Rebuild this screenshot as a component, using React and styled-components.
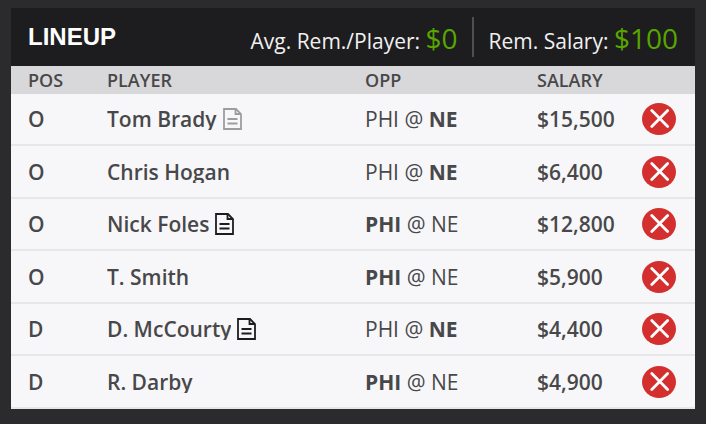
import React, { useState } from 'react'
import styled, { createGlobalStyle } from 'styled-components'

const lineup = [
  { id: 1, pos: 'O', name: 'Tom Brady', team: 'NE', salary: '$15,500', news: 'old' },
  { id: 2, pos: 'O', name: 'Chris Hogan', team: 'NE', salary: '$6,400' },
  { id: 3, pos: 'O', name: 'Nick Foles', team: 'PHI', salary: '$12,800', news: 'new' },
  { id: 4, pos: 'O', name: 'T. Smith', team: 'PHI', salary: '$5,900' },
  { id: 5, pos: 'D', name: 'D. McCourty', team: 'NE', salary: '$4,400', news: 'new' },
  { id: 6, pos: 'D', name: 'R. Darby', team: 'PHI', salary: '$4,900' },
]

function NewsIcon({ recent }) {
  return (
    <NewsSvg viewBox="0 0 19 22" $recent={recent} role="img" aria-label="Player news">
      <path d="M1 1H13L18 6V21H1Z" />
      <path d="M12.5 1V6H18" />
      <path d="M4.5 11H14.5M4.5 15.5H14.5" />
    </NewsSvg>
  )
}

function App() {
  const [players, setPlayers] = useState(lineup)

  const removePlayer = (id) => {
    setPlayers(players.filter((player) => player.id !== id))
  }

  return (
    <>
      <GlobalStyle />
      <Panel>
        <Header>
          <Title>LINEUP</Title>
          <Totals>
            <Total>Avg. Rem./Player: <Money>$0</Money></Total>
            <Total>Rem. Salary: <Money>$100</Money></Total>
          </Totals>
        </Header>
        <Table>
          <thead>
            <tr>
              <HeadCell $width="96px">POS</HeadCell>
              <HeadCell>PLAYER</HeadCell>
              <HeadCell $width="172px">OPP</HeadCell>
              <HeadCell $width="105px">SALARY</HeadCell>
              <HeadCell as="td" $width="53px" />
            </tr>
          </thead>
          <tbody>
            {players.map((player) => (
              <Row key={player.id}>
                <Cell>{player.pos}</Cell>
                <Cell>
                  <Player>
                    <Name>{player.name}</Name>
                    {player.news && <NewsIcon recent={player.news === 'new'} />}
                  </Player>
                </Cell>
                <Cell $light>
                  <Team $own={player.team === 'PHI'}>PHI</Team> @ <Team $own={player.team === 'NE'}>NE</Team>
                </Cell>
                <Cell>{player.salary}</Cell>
                <Cell>
                  <RemoveButton aria-label={`Remove ${player.name}`} onClick={() => removePlayer(player.id)}>
                    <svg viewBox="0 0 20 20" width="20" height="20">
                      <path d="M2.8 1.6L18.6 17.4M18.6 1.6L2.8 17.4" />
                    </svg>
                  </RemoveButton>
                </Cell>
              </Row>
            ))}
          </tbody>
        </Table>
      </Panel>
    </>
  )
}

const GlobalStyle = createGlobalStyle`
  * {
    box-sizing: border-box;
  }
  body {
    margin: 0;
    padding: 8px 11px 15px;
    background: #2b2b2d;
    color: #48484a;
    font-family: 'Open Sans', 'Noto Sans', sans-serif;
  }
`
const Panel = styled.main`
  background: #f7f7f9;
`
const Header = styled.header`
  display: flex;
  justify-content: space-between;
  align-items: center;
  height: 58px;
  padding: 0 17px;
  background: #1d1d1f;
  color: #fff;
`
const Title = styled.h1`
  margin: 0;
  font: bold 24px/28px 'Liberation Sans', Arial, sans-serif;
`
const Totals = styled.div`
  display: flex;
`
const Total = styled.div`
  height: 40px;
  padding-top: 3px;
  font-size: 21px;
  line-height: 36px;
  color: #f0f0f0;
  white-space: nowrap;

  & + & {
    margin-left: 14px;
    padding-left: 15px;
    border-left: 2px solid #4f4f51;
  }
`
const Money = styled.span`
  font-size: 28px;
  color: #58a600;
`
const Table = styled.table`
  width: 100%;
  table-layout: fixed;
  border-collapse: separate;
  border-spacing: 0;
`
const HeadCell = styled.th`
  width: ${(props) => props.$width || 'auto'};
  height: 28px;
  padding: 0;
  background: #d8d8da;
  font-size: 18px;
  font-weight: 600;
  line-height: 28px;
  text-align: left;

  &:first-child {
    padding-left: 17px;
  }
`
const Row = styled.tr`
  height: 52px;

  &:nth-child(even) {
    height: 53px;
  }
`
const Cell = styled.td`
  padding: 0;
  border-bottom: 2px solid #e7e7e9;
  font-size: 21px;
  font-weight: ${(props) => (props.$light ? 400 : 600)};
  line-height: 28px;
  vertical-align: middle;
  white-space: nowrap;

  &:first-child {
    padding-left: 17px;
  }
`
const Player = styled.div`
  display: flex;
  align-items: center;
  gap: 6px;
`
const Name = styled.span`
  overflow: hidden;
  line-height: 22px;
`
const NewsSvg = styled.svg`
  width: 19px;
  height: 22px;
  fill: none;
  stroke: ${(props) => (props.$recent ? '#1d1d1f' : '#9d9d9f')};
  stroke-width: 1.8;
`
const Team = styled.span`
  font-weight: ${(props) => (props.$own ? 700 : 400)};
`
const RemoveButton = styled.button`
  display: flex;
  align-items: center;
  justify-content: center;
  width: 34px;
  height: 32px;
  padding: 0;
  border: 0;
  border-radius: 50%;
  background: #d32f2f;
  cursor: pointer;

  path {
    fill: none;
    stroke: #fff;
    stroke-width: 2.8;
    stroke-linecap: round;
  }
`

export default App
